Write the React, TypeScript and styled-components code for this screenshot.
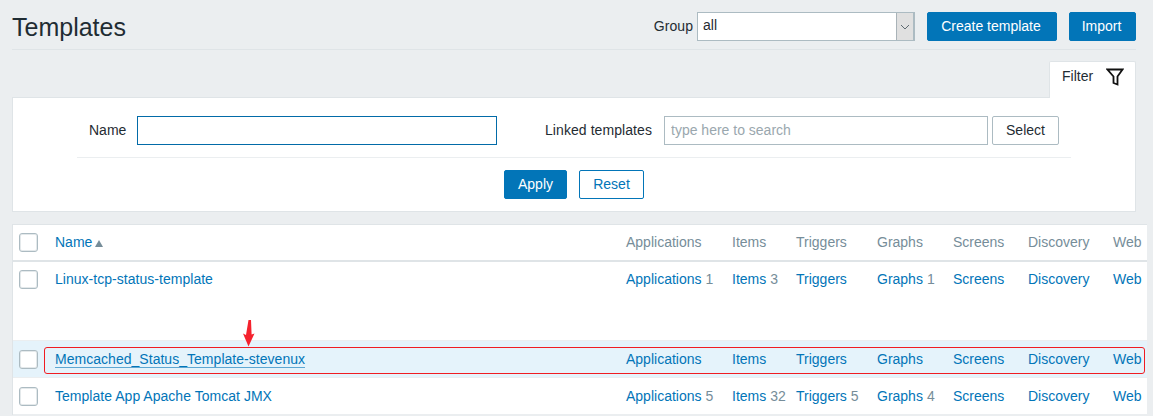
import styled, { createGlobalStyle } from 'styled-components';

const GlobalStyle = createGlobalStyle`
  html, body {
    margin: 0;
    padding: 0;
    height: 416px;
    overflow: hidden;
    background-color: #ebeef0;
    color: #1f2c33;
    font-family: "Liberation Sans", Arial, sans-serif;
    font-size: 14px;
  }
  * {
    box-sizing: border-box;
  }
`;

const COLUMNS = ['Applications', 'Items', 'Triggers', 'Graphs', 'Screens', 'Discovery', 'Web'];

const ROWS = [
  { name: 'Linux-tcp-status-template', counts: [1, 3, 0, 1], tall: true },
  { name: 'Memcached_Status_Template-stevenux', counts: [0, 0, 0, 0], hovered: true },
  { name: 'Template App Apache Tomcat JMX', counts: [5, 32, 5, 4] },
];

const App = () => {
  return (
    <Page>
      <GlobalStyle />
      <Header>
        <Title>Templates</Title>
        <Controls>
          <GroupLabel>Group</GroupLabel>
          <GroupSelect>
            <span>all</span>
            <SelectArrow>
              <svg width="10" height="6" viewBox="0 0 10 6" fill="none" stroke="#5f6b72" strokeWidth="1">
                <path d="M1 1l4 4 4-4" />
              </svg>
            </SelectArrow>
          </GroupSelect>
          <PrimaryButton $width={130} $left={12}>Create template</PrimaryButton>
          <PrimaryButton $width={67} $left={12}>Import</PrimaryButton>
        </Controls>
      </Header>

      <TabRow>
        <FilterTab>
          Filter
          <svg width="18" height="18" viewBox="0 0 18 18" fill="none" stroke="#111" strokeWidth="1.800" strokeLinejoin="miter">
            <path d="M1.500 1.500h15l-5 7v8l-4-1.500v-6.500z" />
          </svg>
        </FilterTab>
      </TabRow>

      <FilterBox>
        <FilterFields>
          <NameLabel>Name</NameLabel>
          <NameInput />
          <LinkedLabel>Linked templates</LinkedLabel>
          <SearchInput placeholder="type here to search" />
          <SelectButton>Select</SelectButton>
        </FilterFields>
        <FilterActions>
          <ApplyButton $width={63} $left={0}>Apply</ApplyButton>
          <OutlineButton>Reset</OutlineButton>
        </FilterActions>
      </FilterBox>

      <TableBox>
        <HeaderRow>
          <Checkbox />
          <SortLink>
            Name
            <SortArrow />
          </SortLink>
          {COLUMNS.map((column) => (
            <HeadCell key={column}>{column}</HeadCell>
          ))}
        </HeaderRow>
        {ROWS.map((row) => (
          <BodyRow key={row.name} $tall={row.tall} $hovered={row.hovered}>
            <Checkbox />
            <NameLink $hovered={row.hovered}>{row.name}</NameLink>
            {COLUMNS.map((column, index) => (
              <Cell key={column}>
                <CellLink>{column}</CellLink>
                {row.counts[index] > 0 && <Count>{row.counts[index]}</Count>}
              </Cell>
            ))}
          </BodyRow>
        ))}
      </TableBox>

      <RedArrow width="12" height="27" viewBox="0 0 12 27">
        <path d="M5.500 0H8l.6 14.500L11.500 13.500 5.500 26.500 0 13.500l3 1.500z" fill="#f5222d" />
      </RedArrow>
      <RedFrame />
    </Page>
  );
};

const Page = styled.div`
  position: relative;
  width: 1153px;
  height: 416px;
  padding: 0 17px 0 12px;
  overflow: hidden;
`;

const Header = styled.header`
  height: 50px;
  display: flex;
  align-items: flex-start;
  justify-content: space-between;
  padding-top: 12px;
  border-bottom: 1px solid #dfe4e7;
`;

const Title = styled.h1`
  margin: 0;
  font-size: 25px;
  font-weight: 400;
  line-height: 30px;
  color: #1f2c33;
`;

const Controls = styled.div`
  display: flex;
  align-items: center;
`;

const GroupLabel = styled.label`
  margin: 0 4px 2px 0;
  letter-spacing: 0.05px;
`;

const GroupSelect = styled.div`
  width: 218px;
  height: 29px;
  display: flex;
  align-items: stretch;
  justify-content: space-between;
  padding-left: 5px;
  line-height: 25px;
  background-color: #fff;
  border: 1px solid #acbbc2;
  border-right-width: 2px;
`;

const SelectArrow = styled.div`
  width: 17px;
  display: flex;
  align-items: center;
  justify-content: center;
  background-color: #e0e0e0;
  border-left: 1px solid #a9b3b8;
`;

const PrimaryButton = styled.button<{ $width: number; $left: number }>`
  width: ${(props) => props.$width}px;
  height: 29px;
  margin-left: ${(props) => props.$left}px;
  padding: 0 2px 2px 0;
  color: #fff;
  font: inherit;
  background-color: #0275b8;
  border: 1px solid #0275b8;
  border-radius: 2px;
`;

const ApplyButton = styled(PrimaryButton)`
  padding-right: 0;
`;

const OutlineButton = styled.button`
  width: 65px;
  height: 29px;
  padding: 0 0 2px;
  color: #0275b8;
  font: inherit;
  background-color: #fff;
  border: 1px solid #0275b8;
  border-radius: 2px;
`;

const TabRow = styled.div`
  display: flex;
  justify-content: flex-end;
  margin-top: 11px;
`;

const FilterTab = styled.div`
  position: relative;
  z-index: 1;
  width: 87px;
  height: 37px;
  margin-bottom: -1px;
  display: flex;
  align-items: flex-start;
  justify-content: space-between;
  padding: 6px 11px 0 12px;
  line-height: 17px;
  background-color: #fff;
  border: 1px solid #dfe4e7;
  border-bottom: none;
  border-radius: 2px 2px 0 0;
`;

const FilterBox = styled.section`
  height: 115px;
  padding: 18px 64px 0;
  background-color: #fff;
  border: 1px solid #dfe4e7;
`;

const FilterFields = styled.div`
  height: 42px;
  display: flex;
  align-items: flex-start;
  padding-left: 12px;
  line-height: 29px;
  border-bottom: 1px solid #ebeef0;
`;

const NameLabel = styled.label`
  width: 48px;
`;

const NameInput = styled.input`
  width: 360px;
  height: 29px;
  padding: 0 5px;
  font: inherit;
  border: 1px solid #026ba8;
  outline: none;
`;

const LinkedLabel = styled.label`
  margin-left: 48px;
  width: 119px;
  letter-spacing: 0.07px;
`;

const SearchInput = styled.input`
  width: 324px;
  height: 29px;
  padding: 0 6px;
  font: inherit;
  border: 1px solid #acbbc2;
  outline: none;
  &::placeholder {
    color: #9aa7ae;
    opacity: 1;
  }
`;

const SelectButton = styled.button`
  width: 67px;
  height: 29px;
  margin-left: 4px;
  padding: 0;
  color: #1f2c33;
  font: inherit;
  line-height: 17px;
  background-color: #fff;
  border: 1px solid #acbbc2;
  border-radius: 2px;
`;

const FilterActions = styled.div`
  display: flex;
  justify-content: center;
  gap: 12px;
  margin-top: 12px;
`;

const TableBox = styled.section`
  width: 1135px;
  margin-top: 12px;
  background-color: #fff;
  border-top: 1px solid #dfe4e7;
  border-left: 1px solid #dfe4e7;
`;

const gridColumns = '42px 571px 106px 64px 81px 76px 75px 85px 34px';

const HeaderRow = styled.div`
  height: 37px;
  display: grid;
  grid-template-columns: ${gridColumns};
  align-items: center;
  padding-bottom: 1px;
  border-bottom: 2px solid #dfe4e7;
`;

const BodyRow = styled.div<{ $tall?: boolean; $hovered?: boolean }>`
  height: ${(props) => (props.$tall ? 79 : 37)}px;
  display: grid;
  grid-template-columns: ${gridColumns};
  align-items: start;
  padding-top: ${(props) => (props.$tall ? 8 : 9)}px;
  line-height: 19px;
  background-color: ${(props) => (props.$hovered ? '#e5f3fb' : '#fff')};
  border-bottom: 1px solid #ebeef0;
`;

const Checkbox = styled.div`
  width: 19px;
  height: 19px;
  margin-left: 6px;
  background-color: #fff;
  border: 1px solid #acbbc2;
  border-radius: 3px;
  box-shadow: inset 0 0 0 1px #e4e9eb;
`;

const SortLink = styled.span`
  display: flex;
  align-items: center;
  gap: 3px;
  color: #0275b8;
`;

const SortArrow = styled.i`
  width: 0;
  height: 0;
  margin-top: 2px;
  border-left: 4px solid transparent;
  border-right: 4px solid transparent;
  border-bottom: 7px solid #768d99;
`;

const HeadCell = styled.span`
  color: #768d99;
  white-space: nowrap;
`;

const NameLink = styled.a<{ $hovered?: boolean }>`
  justify-self: start;
  color: #0275b8;
  line-height: 16px;
  margin-top: 1px;
  letter-spacing: 0.03px;
  border-bottom: 1px solid ${(props) => (props.$hovered ? 'rgba(2, 117, 184, 0.6)' : 'transparent')};
`;

const Cell = styled.div`
  white-space: nowrap;
`;

const CellLink = styled.a`
  color: #0275b8;
`;

const Count = styled.sup`
  margin-left: 4px;
  color: #768d99;
  font-size: 14px;
  line-height: 0;
  vertical-align: baseline;
`;

const RedArrow = styled.svg`
  position: absolute;
  left: 243px;
  top: 320px;
`;

const RedFrame = styled.div`
  position: absolute;
  left: 44px;
  top: 347px;
  width: 1101px;
  height: 27px;
  border: 1px solid #f01c22;
  border-radius: 3px;
  pointer-events: none;
`;

export default App;
